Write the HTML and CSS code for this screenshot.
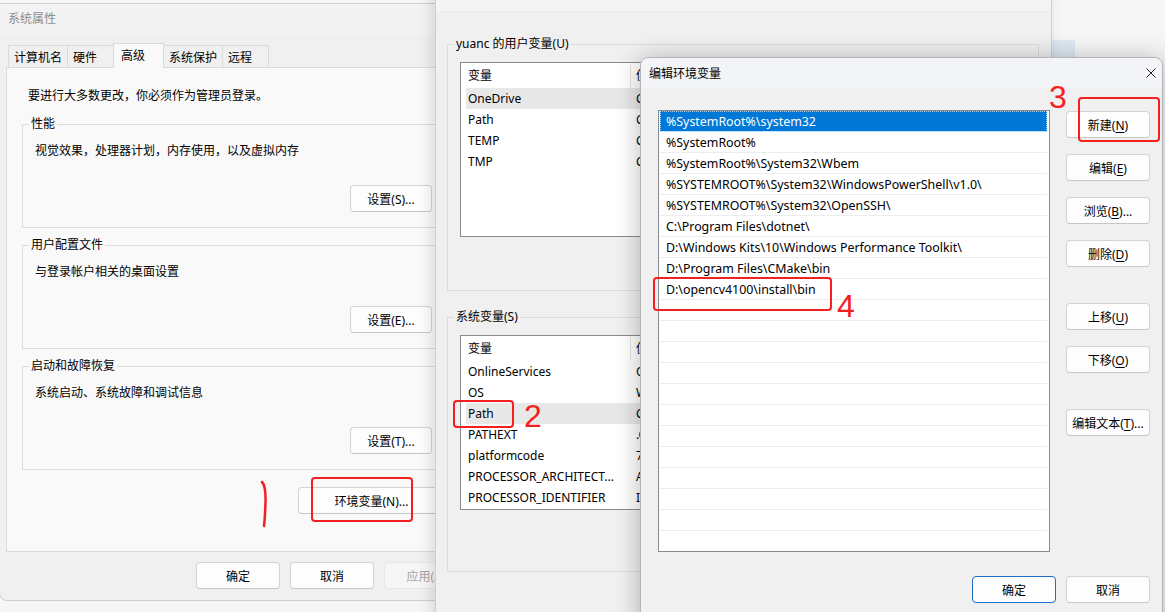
FILE: index.html
```html
<!DOCTYPE html>
<html lang="zh-CN">
<head>
    <meta charset="UTF-8">
    <title>环境变量</title>
    <link rel="stylesheet" href="styles.css">
</head>
<body>
<div class="desktop">
    <div class="patch"></div>

    <!-- 系统属性 -->
    <section class="window sysprops">
        <div class="titlebar">系统属性</div>
        <div class="tabs">
            <span class="tab">计算机名</span>
            <span class="tab">硬件</span>
            <span class="tab active">高级</span>
            <span class="tab">系统保护</span>
            <span class="tab">远程</span>
        </div>
        <div class="tabpage">
            <p class="note">要进行大多数更改，你必须作为管理员登录。</p>
            <fieldset class="group">
                <legend>性能</legend>
                <p class="desc">视觉效果，处理器计划，内存使用，以及虚拟内存</p>
                <div class="group-actions"><button class="btn">设置(S)...</button></div>
            </fieldset>
            <fieldset class="group">
                <legend>用户配置文件</legend>
                <p class="desc">与登录帐户相关的桌面设置</p>
                <div class="group-actions"><button class="btn">设置(E)...</button></div>
            </fieldset>
            <fieldset class="group">
                <legend>启动和故障恢复</legend>
                <p class="desc">系统启动、系统故障和调试信息</p>
                <div class="group-actions"><button class="btn">设置(T)...</button></div>
            </fieldset>
            <div class="env-row"><button class="btn env-btn">环境变量(N)...</button></div>
        </div>
        <div class="footer">
            <button class="btn">确定</button>
            <button class="btn">取消</button>
            <button class="btn disabled">应用(A)</button>
        </div>
    </section>

    <!-- 环境变量 -->
    <section class="window envvars">
        <div class="titlebar"></div>
        <fieldset class="vgroup user">
            <legend>yuanc 的用户变量(U)</legend>
            <div class="list">
                <div class="list-head"><span class="col-name">变量</span><span class="col-value">值</span></div>
                <div class="row selected"><span class="col-name">OneDrive</span><span class="col-value">C:\Users\yuanc\OneDrive</span></div>
                <div class="row"><span class="col-name">Path</span><span class="col-value">C:\</span></div>
                <div class="row"><span class="col-name">TEMP</span><span class="col-value">C:\</span></div>
                <div class="row"><span class="col-name">TMP</span><span class="col-value">C:\</span></div>
            </div>
        </fieldset>
        <fieldset class="vgroup sys">
            <legend>系统变量(S)</legend>
            <div class="list">
                <div class="list-head"><span class="col-name">变量</span><span class="col-value">值</span></div>
                <div class="row"><span class="col-name">OnlineServices</span><span class="col-value">Online Services</span></div>
                <div class="row"><span class="col-name">OS</span><span class="col-value">Windows_NT</span></div>
                <div class="row selected"><span class="col-name">Path</span><span class="col-value">C:\Windows\system32;C:\Windows;</span></div>
                <div class="row"><span class="col-name">PATHEXT</span><span class="col-value">.COM;.EXE;.BAT;.CMD;.VBS</span></div>
                <div class="row"><span class="col-name">platformcode</span><span class="col-value">7</span></div>
                <div class="row"><span class="col-name">PROCESSOR_ARCHITECT...</span><span class="col-value">AMD64</span></div>
                <div class="row"><span class="col-name">PROCESSOR_IDENTIFIER</span><span class="col-value">Intel64 Family 6</span></div>
            </div>
        </fieldset>
    </section>

    <!-- 编辑环境变量 -->
    <section class="window editenv">
        <div class="titlebar">
            <span>编辑环境变量</span>
            <svg class="close" width="10" height="10" viewBox="0 0 10 10">
                <path d="M0.5 0.5L9.5 9.5M9.5 0.5L0.5 9.5" stroke="#1f1f1f" stroke-width="1"/>
            </svg>
        </div>
        <div class="edit-body">
            <div class="path-list">
                <div class="path-row selected">%SystemRoot%\system32</div>
                <div class="path-row">%SystemRoot%</div>
                <div class="path-row">%SystemRoot%\System32\Wbem</div>
                <div class="path-row">%SYSTEMROOT%\System32\WindowsPowerShell\v1.0\</div>
                <div class="path-row">%SYSTEMROOT%\System32\OpenSSH\</div>
                <div class="path-row">C:\Program Files\dotnet\</div>
                <div class="path-row">D:\Windows Kits\10\Windows Performance Toolkit\</div>
                <div class="path-row">D:\Program Files\CMake\bin</div>
                <div class="path-row">D:\opencv4100\install\bin</div>
                <div class="path-row"></div>
                <div class="path-row"></div>
                <div class="path-row"></div>
                <div class="path-row"></div>
                <div class="path-row"></div>
                <div class="path-row"></div>
                <div class="path-row"></div>
                <div class="path-row"></div>
                <div class="path-row"></div>
                <div class="path-row"></div>
                <div class="path-row"></div>
                <div class="path-row"></div>
            </div>
            <div class="edit-side">
                <button class="btn">新建(<u>N</u>)</button>
                <button class="btn">编辑(<u>E</u>)</button>
                <button class="btn">浏览(<u>B</u>)...</button>
                <button class="btn">删除(<u>D</u>)</button>
                <button class="btn spaced">上移(<u>U</u>)</button>
                <button class="btn">下移(<u>O</u>)</button>
                <button class="btn spaced">编辑文本(<u>T</u>)...</button>
            </div>
        </div>
        <div class="edit-footer">
            <button class="btn primary">确定</button>
            <button class="btn">取消</button>
        </div>
    </section>

    <!-- 标注 -->
    <div class="mark-box box-env"></div>
    <svg class="mark-stroke" width="10" height="48" viewBox="0 0 10 48">
        <path d="M3 2 Q7 6 6.5 22 Q6 38 5 46" fill="none" stroke="#f41f1f" stroke-width="2.5" stroke-linecap="round"/>
    </svg>
    <div class="mark-box box-path"></div>
    <span class="mark-num num-2">2</span>
    <div class="mark-box box-new"></div>
    <span class="mark-num num-3">3</span>
    <div class="mark-box box-opencv"></div>
    <span class="mark-num num-4">4</span>
</div>
</body>
</html>
```

FILE: styles.css
```css
* {
    box-sizing: border-box;
}
html, body {
    margin: 0;
}
body {
    width: 1165px;
    height: 612px;
    overflow: hidden;
    font: 12px "Noto Sans", "Noto Sans CJK SC", sans-serif;
    color: #000;
}
p {
    margin: 0;
    line-height: 16px;
}
.desktop {
    position: relative;
    width: 1165px;
    height: 612px;
    background: #f6f6f6;
    overflow: hidden;
}
.patch {
    position: absolute;
    left: 1052px;
    top: 40px;
    width: 23px;
    height: 18px;
    background: #dfe8f2;
}

/* windows */
.window {
    position: absolute;
    background: #f0f0f0;
    border: 1px solid #cfcfcf;
}
.titlebar {
    height: 31px;
    line-height: 29px;
    padding-left: 8px;
}
.btn {
    width: 84px;
    height: 27px;
    padding: 0;
    font: inherit;
    color: #000;
    background: #fdfdfd;
    border: 1px solid #d3d3d3;
    border-bottom-color: #c6c6c6;
    border-radius: 4px;
}
.btn u {
    text-underline-offset: 2px;
}
.btn.disabled {
    color: #a3a3a3;
    background: #f6f6f6;
    border-color: #e6e6e6;
}
.btn.primary {
    border-color: #1c6fc4;
}

/* 系统属性 */
.sysprops {
    left: -1px;
    top: 3px;
    width: 480px;
    height: 598px;
    border-radius: 0 0 8px 8px;
    z-index: 1;
}
.sysprops .titlebar {
    color: #8d8d8d;
    background: #f3f3f3;
}
.tabs {
    position: relative;
    z-index: 1;
    display: flex;
    align-items: flex-end;
    height: 24px;
    margin-top: 8px;
    padding-left: 8px;
}
.tab {
    height: 22px;
    min-width: 47px;
    padding: 4px 5px 0;
    margin-right: -1px;
    line-height: 16px;
    border: 1px solid #d9d9d9;
    border-bottom: none;
    background: #f0f0f0;
}
.tab.active {
    height: 25px;
    min-width: 51px;
    padding: 4px 7px 0;
    margin-bottom: -1px;
    background: #f9f9f9;
}
.tabpage {
    height: 485px;
    margin: 0 6px;
    padding-top: 19px;
    border: 1px solid #d9d9d9;
    background: #f9f9f9;
}
.note {
    margin-left: 21px;
    padding-top: 1px;
}
.group {
    min-width: 0;
    margin: 9px 15px 0;
    padding: 0 6px 15px;
    border: 1px solid #dcdcdc;
}
.note + .group {
    margin-top: 12px;
}
.group legend,
.vgroup legend {
    padding: 0 2px;
    line-height: 16px;
}
.group .desc {
    margin: 11px 0 0 6px;
}
.group-actions {
    display: flex;
    justify-content: flex-end;
    margin-top: 26px;
    padding-right: 17px;
}
.group .btn {
    width: 82px;
}
.env-row {
    margin: 17px 0 0 291px;
}
.env-btn {
    width: 147px;
}
.footer {
    display: flex;
    justify-content: flex-end;
    gap: 10px;
    margin-top: 10px;
    padding-right: 10px;
}

/* 环境变量 */
.envvars {
    left: 435px;
    top: -40px;
    width: 617px;
    height: 680px;
    z-index: 2;
    box-shadow: -4px 0 14px rgba(0, 0, 0, 0.12);
}
.envvars .titlebar {
    height: 51px;
    background: #f4f4f4;
    border-bottom: 1px solid #ebebeb;
}
.vgroup {
    min-width: 0;
    margin: 24px 12px 0 11px;
    padding: 0 6px 53px;
    border: 1px solid #dcdcdc;
}
.vgroup.sys {
    margin-top: 18px;
    padding-bottom: 61px;
}
.list {
    height: 175px;
    margin: 10px 6px 0;
    overflow: hidden;
    background: #fff;
    border: 1px solid #868a91;
}
.list-head {
    display: flex;
    height: 25px;
    padding-top: 1px;
    line-height: 24px;
}
.list-head .col-name {
    width: 170px;
    padding-left: 7px;
    border-right: 1px solid #e5e5e5;
}
.row {
    display: flex;
    height: 21px;
    margin-left: 5px;
    padding-top: 1px;
    line-height: 20px;
    white-space: nowrap;
}
.row .col-name {
    width: 165px;
    padding-left: 2px;
}
.col-value {
    padding-left: 5px;
    white-space: nowrap;
}
.row.selected {
    background: #e8e8e8;
}

/* 编辑环境变量 */
.editenv {
    left: 640px;
    top: 57px;
    width: 523px;
    height: 580px;
    z-index: 3;
    border-color: #b4b4b4;
    border-radius: 8px 8px 0 0;
    box-shadow: 0 2px 26px rgba(0, 0, 0, 0.28);
}
.editenv .titlebar {
    display: flex;
    align-items: center;
    justify-content: space-between;
    height: 30px;
    padding-right: 6px;
    border-radius: 8px 8px 0 0;
    background: #f3f4f7;
}
.edit-body {
    display: flex;
    padding: 22px 0 0 17px;
}
.path-list {
    width: 392px;
    height: 442px;
    overflow: hidden;
    background: #fff;
    border: 1px solid #868a91;
}
.path-row {
    height: 21px;
    margin: 0 2px 0 1px;
    padding: 2px 0 0 6px;
    font-size: 12.4px;
    line-height: 18px;
    white-space: nowrap;
    border-bottom: 1px solid #ededed;
}
.path-row.selected {
    color: #fff;
    background: #0078d7;
    outline: 1px dotted #a9cff1;
    outline-offset: -1px;
}
.edit-side {
    display: flex;
    flex-direction: column;
    gap: 16px;
    margin-left: 16px;
    padding-top: 1px;
}
.edit-side .spaced {
    margin-top: 20px;
}
.edit-footer {
    display: flex;
    justify-content: flex-end;
    gap: 10px;
    margin-top: 24px;
    padding-right: 12px;
}

/* annotations */
.mark-box {
    position: absolute;
    z-index: 5;
    border: 2px solid #f41f1f;
    border-radius: 4px;
}
.box-env {
    left: 311px;
    top: 477px;
    width: 102px;
    height: 45px;
}
.box-path {
    left: 453px;
    top: 400px;
    width: 61px;
    height: 28px;
}
.box-new {
    left: 1078px;
    top: 97px;
    width: 82px;
    height: 45px;
}
.box-opencv {
    left: 653px;
    top: 277px;
    width: 179px;
    height: 34px;
}
.mark-stroke {
    position: absolute;
    z-index: 5;
    left: 259px;
    top: 480px;
}
.mark-num {
    position: absolute;
    z-index: 5;
    color: #f41f1f;
    font: 32px/1 "Liberation Sans", Arial, sans-serif;
}
.num-2 {
    left: 524px;
    top: 400px;
}
.num-3 {
    left: 1049px;
    top: 81px;
}
.num-4 {
    left: 837px;
    top: 290px;
}
```
